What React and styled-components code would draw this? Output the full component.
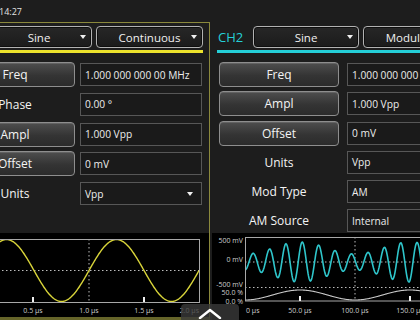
import React from 'react';
import styled, { createGlobalStyle } from 'styled-components';

const GlobalStyle = createGlobalStyle`
  html, body { margin: 0; padding: 0; background: #1d1d1d; }
  body { font-family: "Open Sans", "Liberation Sans", sans-serif; color: #ececec; }
`;

const OLIVE = '#8b893c';

const Screen = styled.div`
  position: relative;
  width: 420px;
  height: 320px;
  overflow: hidden;
  background: #1d1d1d;
  display: flex;
  flex-direction: column;
`;

const StatusBar = styled.div`
  height: 22px;
  flex: none;
  font-size: 9px;
  line-height: 23px;
  color: #e2e2e2;
  text-indent: -1px;
`;

const Columns = styled.div`
  flex: 1;
  min-height: 0;
  display: flex;
  gap: 2px;
  margin-left: -55px;
`;

const Column = styled.section`
  width: 265px;
  flex: none;
  box-sizing: border-box;
  display: flex;
  flex-direction: column;
  border-top: 1px solid ${(p) => (p.$active ? OLIVE : 'transparent')};
  border-right: 1px solid ${(p) => (p.$active ? OLIVE : 'transparent')};
  border-bottom: ${(p) => (p.$active ? `3px solid #66652a` : 'none')};
`;

const ControlPanel = styled.div`
  height: 210px;
  flex: none;
  box-sizing: border-box;
  padding: 3px 6px 0 5px;
`;

const Header = styled.div`
  display: flex;
  gap: 4px;
  height: 22px;
`;

const ChLabel = styled.div`
  width: 32px;
  flex: none;
  display: flex;
  align-items: center;
  padding-left: 1px;
  box-sizing: border-box;
  font-size: 13px;
  color: ${(p) => p.$color};
`;

const Dropdown = styled.div`
  width: ${(p) => p.$w}px;
  flex: none;
  box-sizing: border-box;
  display: grid;
  grid-template-columns: 16px 1fr 16px;
  align-items: center;
  border: 1px solid #b2b2b2;
  border-radius: 4px;
  background: linear-gradient(#272727, #1b1b1b);
  box-shadow: inset 0 0 0 1px #0e0e0e;
  font-size: 11.5px;
  color: #f0f0f0;
  white-space: nowrap;
`;

const DropText = styled.span`
  grid-column: 2;
  text-align: center;
`;

const Caret = styled.span`
  justify-self: center;
  width: 0;
  height: 0;
  border-left: 3px solid transparent;
  border-right: 3px solid transparent;
  border-top: 4px solid #f0f0f0;
`;

const ChannelBar = styled.div`
  height: 3px;
  margin-top: 2px;
  background: ${(p) => p.$color};
`;

const Rows = styled.div`
  display: flex;
  flex-direction: column;
  gap: ${(p) => p.$gap}px;
  margin-top: 9px;
`;

const Row = styled.div`
  display: flex;
  align-items: center;
  height: 25px;
  gap: ${(p) => p.$gap}px;
  padding-left: ${(p) => p.$indent}px;
`;

const KeyButton = styled.div`
  width: 120px;
  height: 25px;
  flex: none;
  box-sizing: border-box;
  display: flex;
  align-items: center;
  justify-content: center;
  border: 1px solid #8e8e8e;
  border-radius: 4px;
  background: linear-gradient(#4e4e4e, #343434 55%, #2b2b2b);
  box-shadow: inset 0 1px 0 rgba(255, 255, 255, 0.12);
  font-size: 12px;
  color: #f4f4f4;
`;

const KeyLabel = styled.div`
  width: 120px;
  flex: none;
  text-align: center;
  font-size: 12px;
  color: #f4f4f4;
`;

const ValueBox = styled.div`
  width: 122px;
  height: 23px;
  flex: none;
  box-sizing: border-box;
  display: flex;
  align-items: center;
  justify-content: space-between;
  padding: 0 8px 0 4px;
  border: 1px solid #575757;
  background: #1a1a1a;
  font-size: 10.2px;
  color: #ececec;
  white-space: nowrap;
`;

const ChartPane = styled.div`
  flex: 1;
  min-height: 0;
  background: #000;
  overflow: hidden;
`;

const ChartSvg = styled.svg`
  display: block;
  font-family: "Open Sans", "Liberation Sans", sans-serif;
  font-size: 7px;
  fill: #cfcfcf;
`;

const HandleTab = styled.div`
  position: absolute;
  left: 181px;
  bottom: 0;
  width: 58px;
  height: 16px;
  display: flex;
  align-items: flex-start;
  justify-content: center;
  padding-top: 4px;
  box-sizing: border-box;
  background: rgba(58, 58, 58, 0.8);
  border-radius: 4px 4px 0 0;
`;

const path = (x0, x1, f) => {
  let d = '';
  for (let x = x0; x <= x1; x += 0.5) {
    d += `${x === x0 ? 'M' : 'L'}${x.toFixed(1)} ${f(x).toFixed(2)} `;
  }
  return d;
};

const leftRows = [
  { key: 'Freq', btn: true, value: '1.000 000 000 00 MHz' },
  { key: 'Phase', value: '0.00 °' },
  { key: 'Ampl', btn: true, value: '1.000 Vpp' },
  { key: 'Offset', btn: true, value: '0 mV' },
  { key: 'Units', value: 'Vpp', select: true },
];

const rightRows = [
  { key: 'Freq', btn: true, value: '1.000 000 000 00 MHz' },
  { key: 'Ampl', btn: true, value: '1.000 Vpp' },
  { key: 'Offset', btn: true, value: '0 mV' },
  { key: 'Units', value: 'Vpp', select: true },
  { key: 'Mod Type', value: 'AM', select: true },
  { key: 'AM Source', value: 'Internal', select: true },
];

function Channel({ name, color, mode, rows, active, rowGap, gap, indent, children }) {
  return (
    <Column $active={active}>
      <ControlPanel>
        <Header>
          <ChLabel $color={color}>{name}</ChLabel>
          <Dropdown $w={106}>
            <DropText>Sine</DropText>
            <Caret />
          </Dropdown>
          <Dropdown $w={107}>
            <DropText>{mode}</DropText>
            <Caret />
          </Dropdown>
        </Header>
        <ChannelBar $color={color} />
        <Rows $gap={rowGap}>
          {rows.map((r) => (
            <Row key={r.key} $gap={gap} $indent={indent}>
              {r.btn ? <KeyButton>{r.key}</KeyButton> : <KeyLabel>{r.key}</KeyLabel>}
              <ValueBox>
                <span>{r.value}</span>
                {r.select && <Caret />}
              </ValueBox>
            </Row>
          ))}
        </Rows>
      </ControlPanel>
      <ChartPane>{children}</ChartPane>
    </Column>
  );
}

function LeftChart() {
  const sine = path(33, 254, (x) => 37.5 - 31 * Math.sin((2 * Math.PI * (x - 144)) / 110));
  return (
    <ChartSvg width="264" height="84">
      <defs>
        <clipPath id="lclip">
          <rect x="33" y="6" width="222" height="64" />
        </clipPath>
      </defs>
      <line x1="33" y1="37.5" x2="254" y2="37.5" stroke="#bdbdbd" strokeWidth="1" strokeDasharray="1.5 2.5" />
      <line x1="144" y1="6" x2="144" y2="69" stroke="#bdbdbd" strokeWidth="1" strokeDasharray="1.5 2.5" />
      <path d={sine} fill="none" stroke="#d9d53a" strokeWidth="1.4" clipPath="url(#lclip)" />
      <rect x="33.5" y="6.5" width="221" height="63" fill="none" stroke="#a8a8a8" strokeWidth="1" />
      <rect x="87" y="64" width="2" height="5" fill="#f0f0f0" />
      <rect x="198" y="64" width="2" height="5" fill="#f0f0f0" />
      <text x="88" y="80" textAnchor="middle">0.5 µs</text>
      <text x="144" y="80" textAnchor="middle">1.0 µs</text>
      <text x="199" y="80" textAnchor="middle">1.5 µs</text>
      <text x="254" y="80" textAnchor="end">2.0 µs</text>
    </ChartSvg>
  );
}

function RightChart() {
  const carrier = path(33, 265, (x) => {
    const a = 14 - 6 * Math.cos((2 * Math.PI * (x - 33)) / 110);
    return 29 - a * Math.sin((2 * Math.PI * (x - 37)) / 16.4);
  });
  const env = path(33, 265, (x) => 67 - 5 * (1 - Math.cos((2 * Math.PI * (x - 33)) / 110)));
  return (
    <ChartSvg width="265" height="87">
      <defs>
        <clipPath id="rclip">
          <rect x="33" y="4" width="240" height="65" />
        </clipPath>
      </defs>
      <line x1="33" y1="29" x2="265" y2="29" stroke="#bdbdbd" strokeWidth="1" strokeDasharray="1.5 2.5" />
      <line x1="33" y1="54.5" x2="265" y2="54.5" stroke="#bdbdbd" strokeWidth="1" strokeDasharray="1.5 2.5" />
      <line x1="143" y1="4" x2="143" y2="68" stroke="#bdbdbd" strokeWidth="1" strokeDasharray="1.5 2.5" />
      <path d={carrier} fill="none" stroke="#2fc6cb" strokeWidth="1.6" clipPath="url(#rclip)" />
      <path d={env} fill="none" stroke="#c9c9c9" strokeWidth="1.1" clipPath="url(#rclip)" />
      <rect x="33.5" y="4.5" width="240" height="63.5" fill="none" stroke="#a8a8a8" strokeWidth="1" />
      <rect x="87" y="63" width="2" height="5" fill="#f0f0f0" />
      <rect x="197" y="63" width="2" height="5" fill="#f0f0f0" />
      <text x="31" y="9.5" textAnchor="end">500 mV</text>
      <text x="31" y="29" textAnchor="end">0 mV</text>
      <text x="31" y="53.5" textAnchor="end">-500 mV</text>
      <text x="31" y="62" textAnchor="end">50.0 %</text>
      <text x="31" y="71" textAnchor="end">0.0 %</text>
      <text x="34" y="80">0 µs</text>
      <text x="88" y="80" textAnchor="middle">50.0 µs</text>
      <text x="143" y="80" textAnchor="middle">100.0 µs</text>
      <text x="198" y="80" textAnchor="middle">150.0 µs</text>
    </ChartSvg>
  );
}

export default function App() {
  return (
    <>
      <GlobalStyle />
      <Screen>
        <StatusBar>14:27</StatusBar>
        <Columns>
          <Channel
            name="CH1"
            color="#ece22c"
            mode="Continuous"
            rows={leftRows}
            active
            rowGap={4.75}
            gap={5}
            indent={5}
          >
            <LeftChart />
          </Channel>
          <Channel
            name="CH2"
            color="#25cfd8"
            mode="Modulation"
            rows={rightRows}
            rowGap={4.25}
            gap={8}
            indent={2}
          >
            <RightChart />
          </Channel>
        </Columns>
        <HandleTab>
          <svg width="24" height="11" viewBox="0 0 24 11">
            <polyline points="2,10 12,2 22,10" fill="none" stroke="#ffffff" strokeWidth="2.4" strokeLinecap="round" strokeLinejoin="round" />
          </svg>
        </HandleTab>
      </Screen>
    </>
  );
}
